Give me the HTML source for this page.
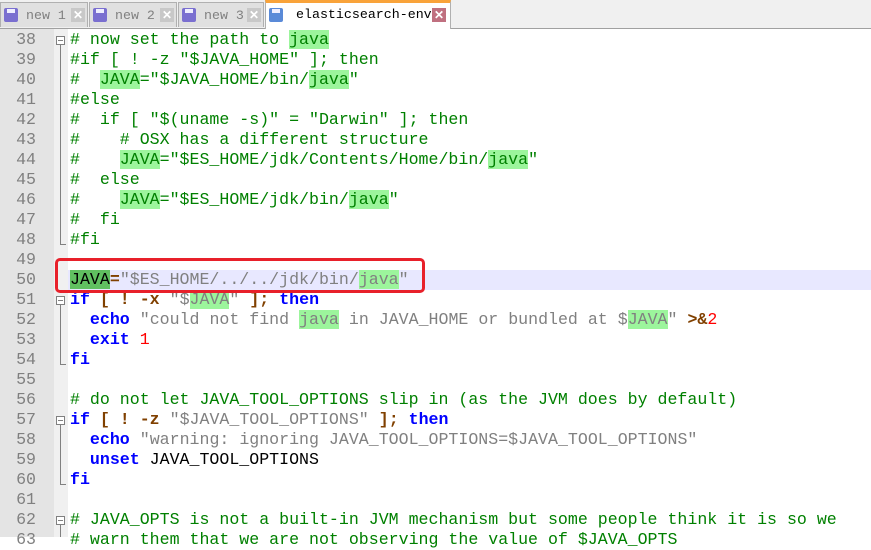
<!DOCTYPE html>
<html><head><meta charset="utf-8"><style>
body{margin:0;width:871px;height:537px;overflow:hidden;background:#fff;position:relative;font-family:"Liberation Mono",monospace}
.tabs{position:absolute;left:0;top:0;width:871px;height:28px;background:#f0f0f0;border-bottom:1px solid #a0a0a0}
.tab{position:absolute;top:2px;height:25px;background:#e0e0e0;border:1px solid #b0b0b0;border-bottom:none;font-size:13.3px;color:#808080;line-height:25px;box-sizing:border-box}
.tab.act{background:#fff;color:#000;top:0;height:29px;border-top:3px solid #f9a33a;line-height:24px}
.ico{position:absolute;left:3px;top:5px;width:14px;height:14px;background:#7a6fd0;border-radius:2px}
.ico:after{content:"";position:absolute;left:3px;top:1px;width:8px;height:4px;background:#eef}
.x{position:absolute;top:5px;width:14px;height:14px;background:#c8c8c8;color:#fff;font-size:12px;line-height:14px;text-align:center;font-weight:bold;font-family:"Liberation Sans",sans-serif}
.gut{position:absolute;left:0;top:29px;width:54px;height:508px;background:#e4e4e4}
.fold{position:absolute;left:54px;top:29px;width:14px;height:508px;background:#f0f0f0}
.ln{position:absolute;left:0;width:36px;text-align:right;font-size:16.6px;color:#808080;line-height:20px}
.l{position:absolute;left:70px;font-size:16.6px;line-height:20px;white-space:pre;color:#000}
.c{color:#008000}.k{color:#0000ff;font-weight:bold}.s{color:#808080}.o{color:#804000;font-weight:bold}.n{color:#ff0000}
.h{background:#9cf59c}.hd{background:#60c060}
.fb{position:absolute;left:56px;width:9px;height:9px;border:1px solid #808080;background:#fff;box-sizing:border-box}
.fb:after{content:"";position:absolute;left:1px;top:3px;width:5px;height:1px;background:#808080}
.vl{position:absolute;left:60px;width:1px;background:#808080}
</style></head><body>
<div class="tabs">
<div class="tab" style="left:0;width:88px"><div class="ico"></div><span style="position:absolute;left:25px">new 1</span><div class="x" style="left:70px">✕</div></div>
<div class="tab" style="left:89px;width:88px"><div class="ico"></div><span style="position:absolute;left:25px">new 2</span><div class="x" style="left:70px">✕</div></div>
<div class="tab" style="left:178px;width:86px"><div class="ico"></div><span style="position:absolute;left:25px">new 3</span><div class="x" style="left:68px">✕</div></div>
<div class="tab act" style="left:265px;width:186px"><div class="ico" style="background:#5a8ad8"></div><span style="position:absolute;left:30px">elasticsearch-env</span><div class="x" style="left:166px;background:#c07080">✕</div></div>
</div>
<div class="gut"></div><div class="fold"></div>
<div style="position:absolute;left:68px;top:270px;width:803px;height:20px;background:#e8e8ff"></div>
<div class="vl" style="top:45px;height:200px"></div><div style="position:absolute;left:60px;top:244px;width:6px;height:1px;background:#808080"></div>
<div class="vl" style="top:305px;height:60px"></div><div style="position:absolute;left:60px;top:364px;width:6px;height:1px;background:#808080"></div>
<div class="vl" style="top:425px;height:60px"></div><div style="position:absolute;left:60px;top:484px;width:6px;height:1px;background:#808080"></div>
<div class="vl" style="top:525px;height:12px"></div>
<div class="fb" style="top:36px"></div><div class="fb" style="top:296px"></div><div class="fb" style="top:416px"></div><div class="fb" style="top:516px"></div>

<div class="ln" style="top:30px">38</div><div class="l c" style="top:30px"># now set the path to <span class="h">java</span></div>
<div class="ln" style="top:50px">39</div><div class="l c" style="top:50px">#if [ ! -z "$JAVA_HOME" ]; then</div>
<div class="ln" style="top:70px">40</div><div class="l c" style="top:70px">#  <span class="h">JAVA</span>="$JAVA_HOME/bin/<span class="h">java</span>"</div>
<div class="ln" style="top:90px">41</div><div class="l c" style="top:90px">#else</div>
<div class="ln" style="top:110px">42</div><div class="l c" style="top:110px">#  if [ "$(uname -s)" = "Darwin" ]; then</div>
<div class="ln" style="top:130px">43</div><div class="l c" style="top:130px">#    # OSX has a different structure</div>
<div class="ln" style="top:150px">44</div><div class="l c" style="top:150px">#    <span class="h">JAVA</span>="$ES_HOME/jdk/Contents/Home/bin/<span class="h">java</span>"</div>
<div class="ln" style="top:170px">45</div><div class="l c" style="top:170px">#  else</div>
<div class="ln" style="top:190px">46</div><div class="l c" style="top:190px">#    <span class="h">JAVA</span>="$ES_HOME/jdk/bin/<span class="h">java</span>"</div>
<div class="ln" style="top:210px">47</div><div class="l c" style="top:210px">#  fi</div>
<div class="ln" style="top:230px">48</div><div class="l c" style="top:230px">#fi</div>
<div class="ln" style="top:250px">49</div>
<div class="ln" style="top:270px">50</div><div class="l" style="top:270px"><span class="hd">JAVA</span><span class="o">=</span><span class="s">"$ES_HOME/../../jdk/bin/<span class="h">java</span>"</span></div>
<div class="ln" style="top:290px">51</div><div class="l" style="top:290px"><span class="k">if</span> <span class="o">[ ! -x</span> <span class="s">"$<span class="h">JAVA</span>"</span> <span class="o">];</span> <span class="k">then</span></div>
<div class="ln" style="top:310px">52</div><div class="l" style="top:310px">  <span class="k">echo</span> <span class="s">"could not find <span class="h">java</span> in JAVA_HOME or bundled at $<span class="h">JAVA</span>"</span> <span class="o">&gt;&amp;</span><span class="n">2</span></div>
<div class="ln" style="top:330px">53</div><div class="l" style="top:330px">  <span class="k">exit</span> <span class="n">1</span></div>
<div class="ln" style="top:350px">54</div><div class="l" style="top:350px"><span class="k">fi</span></div>
<div class="ln" style="top:370px">55</div>
<div class="ln" style="top:390px">56</div><div class="l c" style="top:390px"># do not let JAVA_TOOL_OPTIONS slip in (as the JVM does by default)</div>
<div class="ln" style="top:410px">57</div><div class="l" style="top:410px"><span class="k">if</span> <span class="o">[ ! -z</span> <span class="s">"$JAVA_TOOL_OPTIONS"</span> <span class="o">];</span> <span class="k">then</span></div>
<div class="ln" style="top:430px">58</div><div class="l" style="top:430px">  <span class="k">echo</span> <span class="s">"warning: ignoring JAVA_TOOL_OPTIONS=$JAVA_TOOL_OPTIONS"</span></div>
<div class="ln" style="top:450px">59</div><div class="l" style="top:450px">  <span class="k">unset</span> JAVA_TOOL_OPTIONS</div>
<div class="ln" style="top:470px">60</div><div class="l" style="top:470px"><span class="k">fi</span></div>
<div class="ln" style="top:490px">61</div>
<div class="ln" style="top:510px">62</div><div class="l c" style="top:510px"># JAVA_OPTS is not a built-in JVM mechanism but some people think it is so we</div>
<div class="ln" style="top:530px">63</div><div class="l c" style="top:530px"># warn them that we are not observing the value of $JAVA_OPTS</div>

<div style="position:absolute;left:55px;top:258px;width:370px;height:35px;border:3px solid #e8202a;border-radius:5px;box-sizing:border-box"></div>
</body></html>
